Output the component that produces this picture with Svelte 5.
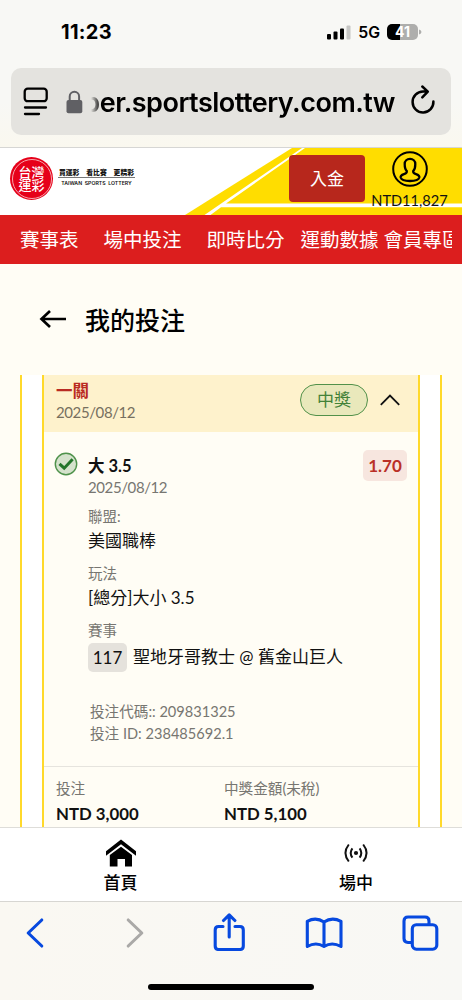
<script>
  const navItems = [
    { label: '賽事表', gap: 25 },
    { label: '場中投注', gap: 25 },
    { label: '即時比分', gap: 16 },
    { label: '運動數據', gap: 5 },
    { label: '會員專區', gap: 0 }
  ];
  const details = [
    { label: '聯盟:', value: '美國職棒' },
    { label: '玩法', value: '[總分]大小 3.5' }
  ];
  const amounts = [
    { label: '投注', value: 'NTD 3,000' },
    { label: '中獎金額(未稅)', value: 'NTD 5,100' }
  ];
</script>

<div class="phone">
  <div class="browser-top">
    <div class="status">
      <span class="time">11:23</span>
      <div class="signals">
        <svg width="24" height="16" viewBox="0 0 24 16">
          <rect x="0" y="10" width="4" height="5.5" rx="1" />
          <rect x="6.5" y="7.5" width="4" height="8" rx="1" />
          <rect x="13" y="4.500" width="4" height="11" rx="1" />
          <rect x="19.500" y="1.500" width="4" height="14" rx="1" fill="#c6c6c4" />
        </svg>
        <span class="net">5G</span>
        <span class="battery"><span>41</span></span>
        <svg class="nub" width="3" height="6" viewBox="0 0 3 6"><path d="M0 0.500Q2.500 1.200 2.500 3T0 5.500Z" fill="#aeaeac" /></svg>
      </div>
    </div>
    <div class="address">
      <svg class="reader" width="26" height="29" viewBox="0 0 26 29" fill="none" stroke="#000" stroke-width="2.300" stroke-linecap="round">
        <rect x="1.700" y="1.700" width="22" height="12.500" rx="3" />
        <path d="M2 20.500H23M2 27H16" />
      </svg>
      <svg class="lock" width="17" height="24" viewBox="0 0 17 24">
        <path d="M3.700 11V6.500a4.700 4.700 0 0 1 9.400 0V11" fill="none" stroke="#606064" stroke-width="2" />
        <rect x="0.500" y="10" width="15.800" height="13.300" rx="2" fill="#606064" />
      </svg>
      <div class="url"><span>per.sportslottery.com.tw</span></div>
      <svg class="reload" width="26" height="30" viewBox="0 0 26 30" fill="none" stroke="#000" stroke-width="2.500" stroke-linecap="round" stroke-linejoin="round">
        <path d="M17.200 7.600H13A10.400 10.400 0 1 0 23.400 17.500M12.300 2.500l5.500 5.100-5.500 5.800" />
      </svg>
    </div>
  </div>

  <header>
    <svg class="stripes" width="462" height="67" viewBox="0 0 462 67">
      <path d="M292 0H462V67H185Z" fill="#ffdd00" />
      <path d="M302 0H305L226 55.500H462V59.300H221L210.500 67H204.500Z" fill="#fff" />
    </svg>
    <div class="brand">
      <div class="seal"><div class="seal-text"><span>台灣</span><span>運彩</span></div></div>
      <div class="tagline">
        <div class="slogan"><span>買運彩</span><span>看比賽</span><span>更精彩</span></div>
        <div class="english">TAIWAN&nbsp; SPORTS&nbsp; LOTTERY</div>
      </div>
    </div>
    <button class="deposit">入金</button>
    <div class="account">
      <svg width="36" height="36" viewBox="0 0 36 36" fill="none" stroke="#000" stroke-width="2">
        <circle cx="18" cy="18" r="16.800" />
        <path stroke-width="2.300" d="M14.800 20C13 18.300 12.700 16 12.700 13C12.700 9.800 15 7.900 18 7.900S23.300 9.800 23.300 13C23.300 16 23 18.300 21.200 20C20.900 22 22 22.600 24 23.200C26.600 24 27.600 25 27.300 26.500C26.600 28.800 22.500 30 18 30S9.400 28.800 8.700 26.500C8.400 25 9.400 24 12 23.200C14 22.600 15.100 22 14.800 20Z" />
      </svg>
      <span>NTD11,827</span>
    </div>
  </header>

  <nav>
    <div class="nav-clip">
      {#each navItems as item}
        <span style="margin-right: {item.gap}px">{item.label}</span>
      {/each}
    </div>
  </nav>

  <main>
    <h1>
      <svg width="28" height="20" viewBox="0 0 28 20" fill="none" stroke="#000" stroke-width="2.700"><path d="M27 10H2.500M11 2L2.500 10L11 18" /></svg>
      我的投注
    </h1>
    <div class="outer">
      <article>
        <div class="card-head">
          <div class="card-title"><strong>一關</strong><span>2025/08/12</span></div>
          <div class="won">中獎</div>
          <svg width="20" height="12" viewBox="0 0 20 12" fill="none" stroke="#111" stroke-width="1.800"><path d="M0.800 10.800L10 1.500L19.200 10.800" /></svg>
        </div>
        <div class="bet">
          <svg class="check" width="24" height="24" viewBox="0 0 24 24">
            <circle cx="12" cy="12" r="10.700" fill="#d5e2cc" stroke="#4f924b" stroke-width="1.400" />
            <path d="M5.500 11.800L10.200 16.200L18.600 7.300" fill="none" stroke="#23752a" stroke-width="3" />
          </svg>
          <div class="bet-body">
            <div class="pick">大 3.5</div>
            <div class="date">2025/08/12</div>
            {#each details as item}
              <div class="label">{item.label}</div>
              <div class="value">{item.value}</div>
            {/each}
            <div class="label">賽事</div>
            <div class="match"><span class="number">117</span><span>聖地牙哥教士 @ 舊金山巨人</span></div>
            <div class="codes"><div>投注代碼:: 209831325</div><div>投注 ID: 238485692.1</div></div>
          </div>
          <div class="odds">1.70</div>
        </div>
        <div class="amounts">
          {#each amounts as item}
            <div><span>{item.label}</span><strong>{item.value}</strong></div>
          {/each}
        </div>
      </article>
    </div>
  </main>

  <div class="tabs">
    <div class="tab home">
      <svg width="32" height="29" viewBox="0 0 32 29">
        <path d="M16 0.500L31 12.300V16.700L16 5.200L1 16.700V12.300Z" />
        <path d="M16 7.700L27 16V27.500H20V20H12.500V27.500H4.800V16Z" />
      </svg>
      <span>首頁</span>
    </div>
    <div class="tab live">
      <svg width="24" height="29" viewBox="0 0 24 29" fill="none" stroke="#111" stroke-width="2">
        <circle cx="12" cy="14" r="2.100" fill="#111" stroke="none" />
        <path d="M8.400 9.300Q5 14 8.400 18.700M15.600 9.300Q19 14 15.600 18.700M4.800 5.500Q-1.900 14 4.800 22.500M19.200 5.500Q25.900 14 19.200 22.500" />
      </svg>
      <span>場中</span>
    </div>
  </div>

  <div class="toolbar">
    <div class="tools">
      <svg class="back" width="20" height="32" viewBox="0 0 20 32"><path d="M16.800 3L3.200 16L16.800 29" /></svg>
      <svg class="forward" width="20" height="32" viewBox="0 0 20 32"><path d="M3.200 3L16.800 16L3.200 29" /></svg>
      <svg class="share" width="32" height="38" viewBox="0 0 32 38"><path d="M10 13.500H5.500Q2.200 13.500 2.200 17V33Q2.200 36.500 5.500 36.500H27Q30.300 36.500 30.300 33V17Q30.300 13.500 27 13.500H22M16.200 24V2.500M10.500 7.500L16.200 1.800L21.900 7.500" /></svg>
      <svg class="book" width="38" height="32" viewBox="0 0 38 32"><path d="M19 5Q11 -0.500 2.300 4.300V29.500Q11 24.500 19 29.500Q27 24.500 36 29.500V4.300Q27 -0.500 19 5V29.500" /></svg>
      <svg class="windows" width="37" height="36" viewBox="0 0 37 36"><path d="M9.500 27.500H6Q2 27.500 2 23.500V6Q2 2 6 2H23Q27 2 27 6V9.500" /><rect x="10.300" y="9.700" width="24.500" height="24.500" rx="4" /></svg>
    </div>
    <div class="indicator"></div>
  </div>
</div>

<style>
  :global(body) { margin: 0; }
  .phone { width: 462px; height: 1000px; overflow: hidden; display: flex; flex-direction: column; background: #fffdf5; color: #111; font-family: Lato, "Noto Sans CJK TC", sans-serif; }
  .phone * { box-sizing: border-box; }
  svg { display: block; flex: none; }
  .browser-top { height: 148px; flex: none; background: linear-gradient(#f8f8f5 70%, #faf8ef); border-bottom: 1px solid #d6d6d4; font-family: Inter, sans-serif; color: #000; }
  .status { height: 68px; display: flex; justify-content: space-between; align-items: center; padding: 0 40px 5px 61px; }
  .time { font-size: 20px; font-weight: 700; letter-spacing: 0.300px; }
  .signals { display: flex; align-items: center; }
  .net { font-size: 15.800px; font-weight: 600; margin: 2px 7px 0 7px; }
  .battery { width: 31px; height: 16px; border-radius: 5px; background: linear-gradient(90deg, #000 41%, #aeaeac 41%); color: #fff; font-size: 14px; font-weight: 700; line-height: 16px; text-align: center; }
  .nub { margin-left: 1px; }
  .address { margin: 0 11px; height: 67px; border-radius: 10px; background: #e4e3df; display: flex; align-items: center; padding: 0 14px 0 12px; }
  .lock { margin: 1px 8px 0 17px; }
  .url { width: 304px; margin-top: 2px; overflow: hidden; display: flex; justify-content: flex-end; font-size: 27px; font-weight: 600; letter-spacing: -0.500px; white-space: nowrap; mask-image: linear-gradient(90deg, transparent 0, #000 10px); }
  .reload { margin: -5px 0 0 14.500px; }
  header { height: 66.500px; flex: none; background: #fff; display: grid; grid-template-columns: 289px 76px 97px; }
  header > * { grid-row: 1; }
  .stripes { grid-column: 1 / -1; }
  .brand { grid-column: 1; display: flex; padding: 9px 0 0 10px; }
  .seal { width: 43px; height: 43px; border-radius: 50%; background: #e60019; padding: 1.500px; }
  .seal-text { width: 40px; height: 40px; border: 1px solid #f7a7ad; border-radius: 50%; color: #fff; font-size: 13px; font-weight: 500; line-height: 13px; display: flex; flex-direction: column; align-items: center; justify-content: center; }
  .tagline { width: 77px; margin: 10px 0 0 5px; }
  .slogan { height: 11px; border-bottom: 1px solid #777; display: flex; justify-content: space-between; padding: 0 1px; font-size: 6.800px; line-height: 10px; font-weight: 900; }
  .english { font: 600 5.200px/10px Inter, sans-serif; text-align: center; white-space: nowrap; }
  .deposit { grid-column: 2; height: 47px; margin: 7px 0 0; padding: 0 0 2px; border: 0; border-radius: 4px; background: #b7271c; color: #fff; font: 17px "Noto Sans CJK TC", sans-serif; }
  .account { grid-column: 3; display: flex; flex-direction: column; align-items: center; padding: 3px 8px 0 0; font-size: 14.600px; line-height: 18px; }
  .account span { margin-top: 4.500px; }
  nav { height: 49.500px; flex: none; background: #dc1e1e; padding: 0 10px 0 20px; }
  .nav-clip { display: flex; overflow: hidden; color: #fff; font-size: 19.500px; line-height: 49px; white-space: nowrap; }
  .nav-clip span { flex: none; }
  main { height: 563px; flex: none; overflow: hidden; }
  h1 { height: 111px; margin: 0; padding: 0 0 1px 39px; display: flex; align-items: center; gap: 18px; font-size: 25px; font-weight: 500; color: #000; }
  .outer { height: 460px; margin: 0 20px; padding: 0 20px; border: solid #ffd92b; border-width: 0 2px; background: #fff; }
  article { height: 460px; border: solid #ffd92b; border-width: 0 2px; background: #fffdf5; }
  .card-head { height: 57px; background: #fef2cc; display: flex; align-items: center; padding: 0 18px 8px 12px; }
  .card-title { flex: 1; display: flex; flex-direction: column; font-size: 15px; letter-spacing: -0.400px; line-height: 22px; color: #77705f; }
  .card-title strong { height: 22px; line-height: 26px; font-size: 16.500px; letter-spacing: 0; color: #b92b22; font-weight: 700; }
  .card-title span { line-height: 24px; height: 22px; }
  .won { width: 68px; height: 32px; margin-right: 12px; border: 1.500px solid #52914a; border-radius: 16px; background: #e9e8bb; color: #438238; font-size: 17px; line-height: 30px; text-align: center; }
  .bet { height: 334.500px; display: flex; padding: 19px 11px 0 10px; border-bottom: 1px solid #e6e4de; }
  .check { margin: 1px 10px 0 0; }
  .bet-body { flex: 1; font-size: 17px; line-height: 24px; }
  .pick { font-size: 16.500px; font-weight: 700; height: 26px; line-height: 30px; }
  .date, .label { color: #777671; line-height: 20px; }
  .date { font-size: 15px; letter-spacing: -0.400px; height: 19px; line-height: 20px; }
  .label { margin-top: 11px; font-size: 14.500px; height: 20px; }
  .value { height: 26px; line-height: 27px; }
  .match { display: flex; align-items: center; gap: 6px; height: 32px; }
  .number { width: 39px; height: 29px; line-height: 29px; border-radius: 5px; background: #e5e2dc; text-align: center; }
  .codes { color: #777671; font-size: 14.600px; line-height: 22px; margin: 27.500px 0 0 2px; }
  .match, .codes { white-space: nowrap; }
  .odds { width: 44px; height: 31px; line-height: 32px; flex: none; margin-top: -1px; border-radius: 5px; background: #f7e6df; color: #ba3027; font-size: 17px; font-weight: 700; text-align: center; }
  .amounts { display: grid; grid-template-columns: 168px 1fr; padding: 9.500px 0 0 12px; }
  .amounts div { display: flex; flex-direction: column; line-height: 25px; }
  .amounts span { font-size: 14.600px; color: #777671; }
  .amounts strong { font-size: 16.800px; }
  .tabs { height: 74px; flex: none; border-top: 1px solid #deddd9; background: #fff; display: flex; justify-content: space-between; padding: 11px 88px 0 102.500px; font-size: 17px; font-weight: 500; color: #000; }
  .tab { width: 36px; display: flex; flex-direction: column; align-items: center; line-height: 29px; white-space: nowrap; }
  .toolbar { height: 99px; flex: none; border-top: 1px solid #d7d6d2; background: linear-gradient(90deg, #faf8f2, #f8f8f5); }
  .tools { display: flex; align-items: center; height: 62px; padding-left: 25px; }
  .tools svg { fill: none; stroke: #0749df; stroke-width: 3.100; stroke-linecap: round; stroke-linejoin: round; }
  .tools .forward { stroke: #aaa9a7; margin-left: 79.500px; }
  .tools .share { margin: -1px 0 1px 68px; }
  .tools .book { margin-left: 60.500px; }
  .tools .windows { margin-left: 59px; }
  .indicator { width: 166px; height: 6px; margin: 20px auto 0; border-radius: 3px; background: #000; }
</style>
